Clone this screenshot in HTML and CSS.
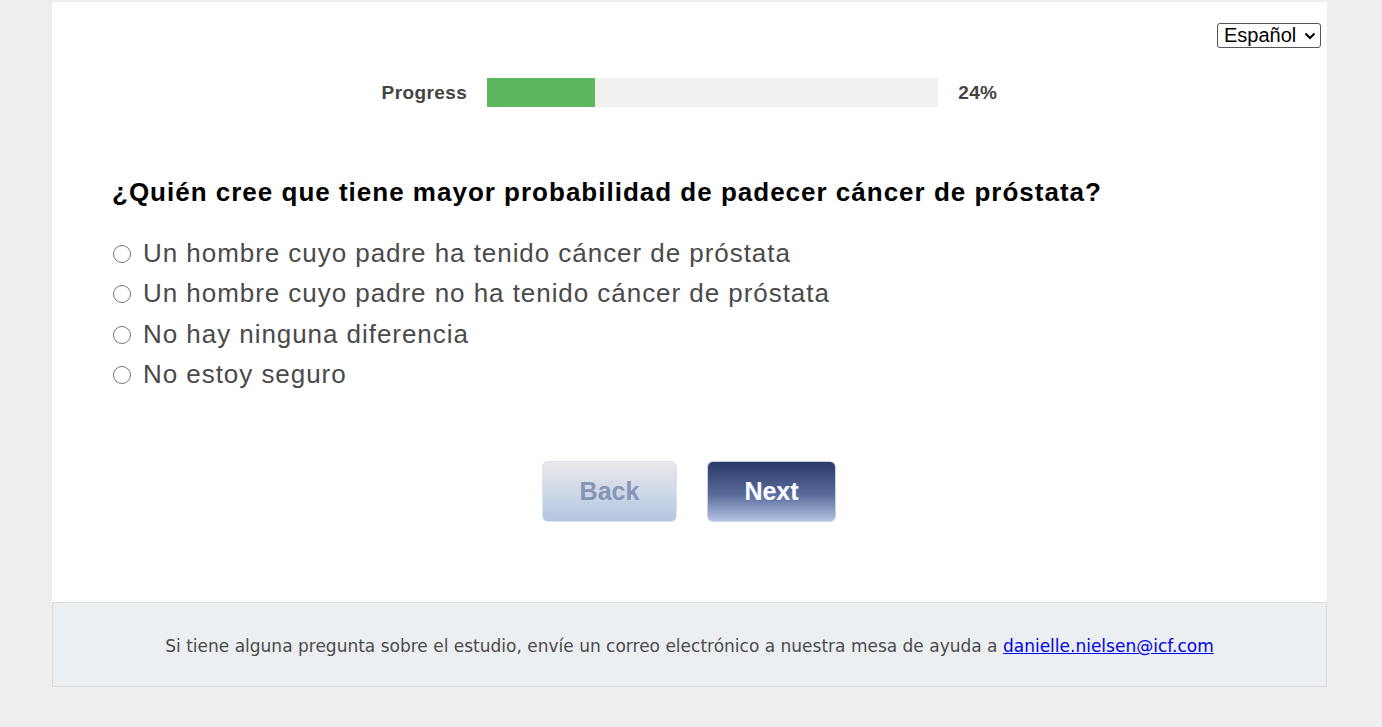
FILE: index.html
```html
<!DOCTYPE html>
<html lang="es">
<head>
<meta charset="utf-8">
<title>Encuesta</title>
<link rel="stylesheet" href="styles.css">
</head>
<body>
<div class="page">
  <main class="main">
    <div class="lang-row">
      <div class="lang-wrap">
        <select class="lang"><option>Español</option><option>English</option></select>
        <svg class="chev" width="12" height="8" viewBox="0 0 12 8"><path d="M1.5 1.5 L6 6 L10.5 1.5" fill="none" stroke="#000" stroke-width="2"/></svg>
      </div>
    </div>
    <div class="progress">
      <span class="progress-label">Progress</span>
      <div class="bar"><div class="fill" style="width:24%"></div></div>
      <span class="progress-pct">24%</span>
    </div>
    <h2 class="question">¿Quién cree que tiene mayor probabilidad de padecer cáncer de próstata?</h2>
    <div class="options">
      <label class="option"><input type="radio" name="q"><span>Un hombre cuyo padre ha tenido cáncer de próstata</span></label>
      <label class="option"><input type="radio" name="q"><span>Un hombre cuyo padre no ha tenido cáncer de próstata</span></label>
      <label class="option"><input type="radio" name="q"><span>No hay ninguna diferencia</span></label>
      <label class="option"><input type="radio" name="q"><span>No estoy seguro</span></label>
    </div>
    <div class="nav">
      <button class="btn btn-back">Back</button>
      <button class="btn btn-next">Next</button>
    </div>
  </main>
  <footer class="footer">
    <p class="footer-text">Si tiene alguna pregunta sobre el estudio, envíe un correo electrónico a nuestra mesa de ayuda a <a href="#">danielle.nielsen@icf.com</a></p>
  </footer>
</div>
</body>
</html>
```
FILE: styles.css
```css
html, body {
  margin: 0;
  padding: 0;
  background: #eeeeee;
}
body {
  font-family: "Liberation Sans", Arial, sans-serif;
}
.page {
  width: 1275px;
  margin: 2px 0 0 52px;
}
.main {
  background: #ffffff;
  height: 600px;
  box-sizing: border-box;
  padding: 21px 6px 0 60px;
}
.lang-row {
  display: flex;
  justify-content: flex-end;
  height: 24px;
}
.lang-wrap {
  position: relative;
  width: 104px;
  height: 25px;
}
.lang {
  appearance: none;
  -webkit-appearance: none;
  width: 104px;
  height: 25px;
  box-sizing: border-box;
  font-family: "Liberation Sans", Arial, sans-serif;
  font-size: 20px;
  line-height: 23px;
  padding: 0 0 0 6px;
  border: 1px solid #555;
  border-radius: 3px;
  background: #fff;
  color: #000;
}
.chev {
  position: absolute;
  right: 5px;
  top: 9px;
  pointer-events: none;
}
.progress {
  display: flex;
  align-items: center;
  justify-content: center;
  gap: 20px;
  margin: 31px 0 0 -54px;
}
.progress-label, .progress-pct {
  font-weight: bold;
  font-size: 19px;
  color: #444;
  letter-spacing: 0.4px;
}
.bar {
  width: 451px;
  height: 29px;
  background: #f0f0f0;
}
.fill {
  height: 100%;
  background: #5cb85c;
}
.question {
  margin: 70px 0 0 0;
  font-size: 26px;
  font-weight: bold;
  color: #000;
  line-height: 30px;
  letter-spacing: 1px;
}
.options {
  margin-top: 26px;
  display: flex;
  flex-direction: column;
}
.option {
  display: flex;
  align-items: center;
  height: 40.5px;
  font-size: 26px;
  letter-spacing: 0.95px;
  color: #4a4a4a;
}
.option input {
  width: 18px;
  height: 18px;
  margin: 1px 12px 0 1px;
}
.nav {
  display: flex;
  justify-content: center;
  gap: 30px;
  margin: 66px 0 0 -55px;
}
.btn {
  height: 61px;
  border-radius: 6px;
  font-family: "Liberation Sans", Arial, sans-serif;
  font-weight: bold;
  font-size: 25px;
  padding: 0;
}
.btn-back {
  width: 135px;
  border: 1px solid #dfe2e8;
  background: linear-gradient(to bottom, #e9e9ea, #b4c6e3);
  color: #8595b5;
}
.btn-next {
  width: 129px;
  border: 1px solid #c8d2e6;
  background: linear-gradient(to bottom, #2a3866, #5a6b9a 55%, #b3c3e3);
  color: #ffffff;
  text-shadow: 1px 1px 1px #5c7ab8;
}
.footer {
  height: 85px;
  box-sizing: border-box;
  background: #eceff2;
  border: 1px solid #d9dde2;
  padding: 31px 0 0 0;
}
.footer-text {
  margin: 0;
  text-align: center;
  font-family: "DejaVu Sans", Tahoma, sans-serif;
  font-size: 17px;
  line-height: 24px;
  letter-spacing: 0;
  color: #4a4a4a;
  white-space: nowrap;
}
.footer-text a {
  color: #0000ee;
  text-decoration: underline;
}
```
